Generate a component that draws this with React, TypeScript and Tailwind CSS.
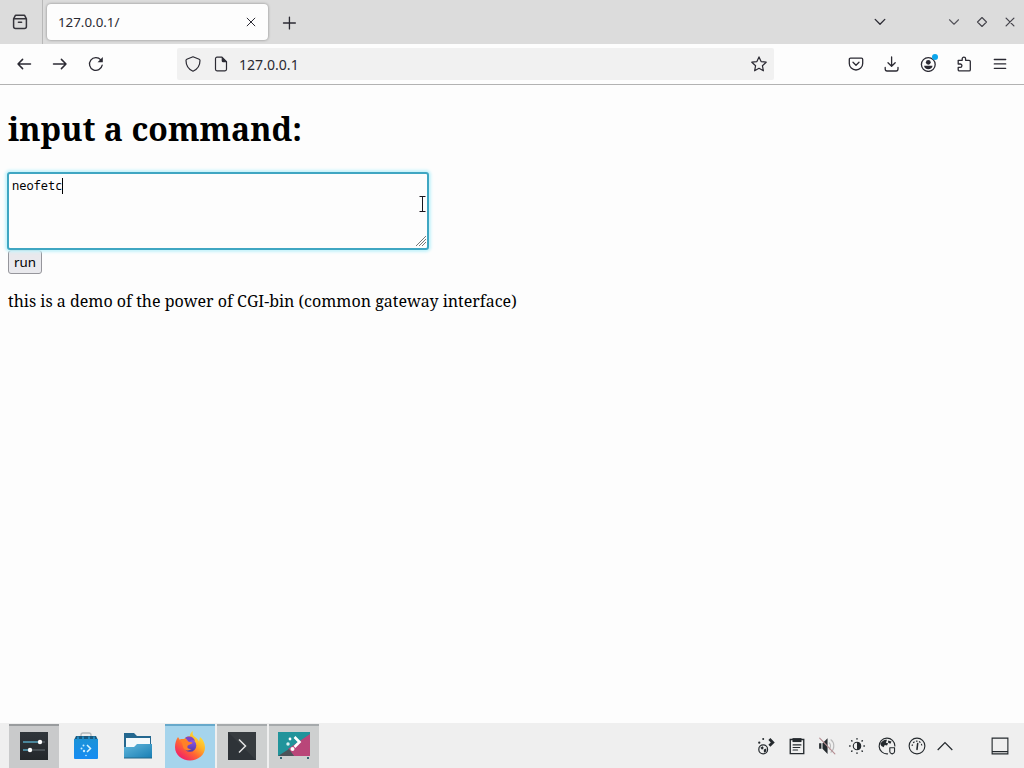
import type { ReactNode } from 'react'

type IconProps = {
  children: ReactNode
  size?: number
  className?: string
}

const Icon = ({ children, size = 16, className = '' }: IconProps) => (
  <svg
    width={size}
    height={size}
    viewBox="0 0 16 16"
    fill="none"
    stroke="currentColor"
    strokeWidth="1.3"
    strokeLinecap="round"
    strokeLinejoin="round"
    className={`block shrink-0 ${className}`}
  >
    {children}
  </svg>
)

const TabBar = () => (
  <div className="flex h-11 items-center bg-[#dcdcdc] text-[#2b2a33]">
    <div className="flex h-11 w-[43px] shrink-0 items-center border-r border-[#b8b8b8] pl-3">
      <Icon className="text-[#35343b]">
        <path d="M4 1.2h8M1.6 4.8h12.8v7.700a2 2 0 0 1-2 2H3.600a2 2 0 0 1-2-2zM1.600 4.800L3.400 1.300M14.400 4.800l-1.800-3.500M6.400 8.200h3.200" strokeWidth="1.500" />
      </Icon>
    </div>
    <div className="ml-1 flex h-9 w-[221px] shrink-0 items-center justify-between rounded bg-[#fdfdfd] pl-[11px] pr-3 shadow-[0_0_3px_rgba(0,0,0,0.4)]">
      <span className="pt-0.5 text-[13.333px] leading-none">127.0.0.1/</span>
      <Icon size={10}>
        <path d="M1.800 1.800l12.400 12.400M14.200 1.800L1.800 14.200" strokeWidth="1.600" />
      </Icon>
    </div>
    <Icon size={14} className="ml-[14px] mt-px">
      <path d="M8.500 1.200v13.600M1.700 8h13.600" strokeWidth="1.500" />
    </Icon>
    <div className="ml-auto flex items-center pr-2">
      <Icon size={14} className="mr-[61px]">
        <path d="M2.500 5L8 10.500 13.500 5" strokeWidth="1.500" />
      </Icon>
      <Icon size={12} className="mr-4 text-[#55545b]">
        <path d="M2 5l6 6 6-6" strokeWidth="1.500" />
      </Icon>
      <Icon size={12} className="mr-4 text-[#45444b]">
        <path d="M8 2l6 6-6 6-6-6z" strokeWidth="1.500" />
      </Icon>
      <Icon size={12} className="text-[#45444b]">
        <path d="M2.800 2.800l10.400 10.400M13.200 2.800L2.800 13.200" strokeWidth="1.700" />
      </Icon>
    </div>
  </div>
)

const NavBar = () => (
  <div className="flex h-[41px] items-center border-b border-[#b2b2b2] bg-[#fdfdfd] pl-4 pr-4 text-[#2b2a33]">
    <Icon>
      <path d="M14.500 8H2M6.600 3.400L2 8l4.600 4.600" strokeWidth="1.500" />
    </Icon>
    <Icon className="ml-5">
      <path d="M1.500 8H14M9.400 3.400L14 8l-4.600 4.600" strokeWidth="1.500" />
    </Icon>
    <Icon className="ml-5">
      <path d="M14.200 9.200A6.400 6.400 0 1 1 12.800 3.800" />
      <path d="M14.800 1v5.200H9.600z" fill="currentColor" stroke="none" />
    </Icon>
    <div className="ml-[73px] flex h-8 w-[597px] items-center rounded-[2px] bg-[#f1f1f1] pl-2 pr-[7px]">
      <Icon>
        <path d="M8 .8l6.200 2.500c.5.200.8.600.8 1.100 0 4.400-2.700 8.800-7 10.800C3.700 13.200 1 8.800 1 4.400c0-.5.300-.9.800-1.100z" strokeWidth="1.200" />
      </Icon>
      <Icon className="ml-3">
        <path d="M9 1.200H4a1.500 1.500 0 0 0-1.500 1.500v10.600A1.500 1.500 0 0 0 4 14.800h8a1.500 1.500 0 0 0 1.500-1.500V5.700z" strokeWidth="1.200" />
        <path d="M8.700 1v3.700A1.500 1.500 0 0 0 10.200 6.200H14z" fill="currentColor" stroke="none" />
      </Icon>
      <span className="ml-[10px] pt-0.5 text-[14.1px] leading-none">127.0.0.1</span>
      <Icon className="ml-auto">
        <path d="M8 .9l2.100 4.700 5.100.6-3.800 3.500 1 5.100L8 12.300l-4.400 2.500 1-5.100L.8 6.200l5.100-.6z" strokeWidth="1.200" />
      </Icon>
    </div>
    <div className="ml-auto flex items-center gap-5">
      <Icon>
        <path d="M2.500 2.200h11c.7 0 1.200.5 1.200 1.200v4a6.700 6.600 0 0 1-13.400 0v-4c0-.7.5-1.200 1.200-1.200zM5 6.300L8 9.200l3-2.900" />
      </Icon>
      <Icon>
        <path d="M7.600.9v9.300M4 6.700l3.600 3.600 3.600-3.600M1.200 11.500v1.600a1.900 1.900 0 0 0 1.900 1.900h9a1.900 1.900 0 0 0 1.900-1.900v-1.600" />
      </Icon>
      <div className="relative">
        <Icon>
          <circle cx="8.300" cy="8.500" r="6.900" />
          <circle cx="8.300" cy="6.300" r="2.400" fill="currentColor" stroke="none" />
          <path d="M4.100 9.700h8.400c-.1 2-2 3.600-4.200 3.600s-4.100-1.600-4.200-3.600z" fill="currentColor" stroke="none" />
        </Icon>
        <span className="absolute -right-0.5 -top-0.5 size-1.5 rounded-full bg-[#0aa5ec]" />
      </div>
      <Icon>
        <path d="M2.200 4.300h4V2.800a1.700 1.700 0 0 1 3.400 0v1.500h3.500c.7 0 1.200.5 1.200 1.200v8.200c0 .7-.5 1.200-1.200 1.200H3.400c-.7 0-1.200-.5-1.200-1.200v-2.300h2a1.700 1.700 0 0 0 0-3.400h-2z" />
      </Icon>
      <Icon>
        <path d="M2.300 3.500h11.400M2.300 7.900h11.400M2.300 12.300h11.400" />
      </Icon>
    </div>
  </div>
)

const Page = () => (
  <main className="flex-1 bg-[#fdfdfd] px-2 pt-[22px] font-['Noto_Serif','DejaVu_Serif_Condensed','DejaVu_Serif',serif] text-black">
    <h1 className="w-max whitespace-nowrap text-[32px] font-bold leading-[44px]">input a command:</h1>
    <div className="relative -ml-px mt-[21px] h-[78px] w-[422px] rounded-[3px] border-2 border-[#3fa6c2] bg-[#fdfdfd] shadow-[0_0_3px_2px_#c5f3fb]">
      <div className="flex items-center pl-[3px] pt-1 font-['Noto_Sans_Mono','DejaVu_Sans_Mono',monospace] text-[12px] leading-4">
        <span>neofetc</span>
        <span className="h-4 w-px bg-black" />
      </div>
      {/* text cursor */}
      <svg className="absolute right-0 top-[21px]" width="9" height="18" viewBox="0 0 9 18" fill="none" stroke="#18151d">
        <path d="M1.500 1.500h6M4.500 1.500v15M1.500 16.500h6" />
      </svg>
      <svg className="absolute bottom-0.5 right-px" width="10" height="10" viewBox="0 0 10 10" stroke="#777">
        <path d="M0 10L10 0M3 10l7-7M6 10l4-4" />
      </svg>
    </div>
    <button className="block h-6 w-[34px] rounded-[3px] border border-[#96969c] bg-[#e9e9ed] pt-0.5 font-['Noto_Sans',sans-serif] text-[13.333px] leading-none">
      run
    </button>
    <p className="mt-4 w-max whitespace-nowrap text-[16px] leading-[22px]">
      this is a demo of the power of CGI-bin (common gateway interface)
    </p>
  </main>
)

const SettingsIcon = () => (
  <svg width="28" height="28" viewBox="0 0 28 28">
    <defs>
      <linearGradient id="dark" x2="0" y2="1">
        <stop stopColor="#30363b" />
        <stop offset="1" stopColor="#24282b" />
      </linearGradient>
    </defs>
    <path fill="url(#dark)" d="M0 0h28v28H0z" />
    <path d="M3 10h22M3 18h22" stroke="#667077" />
    <path d="M3 10h17M3 18h7" stroke="#4dbbe0" />
    <circle cx="20" cy="10" r="2.200" fill="#fff" />
    <circle cx="10" cy="18" r="2.200" fill="#fff" />
  </svg>
)

const DiscoverIcon = () => (
  <svg width="28" height="28" viewBox="0 0 28 28">
    <defs>
      <linearGradient id="bag" x2="0" y2="1">
        <stop stopColor="#1b92d8" />
        <stop offset="1" stopColor="#168cf2" />
      </linearGradient>
    </defs>
    <path d="M9 6V3a2 2 0 0 1 2-2h6a2 2 0 0 1 2 2v3" fill="none" stroke="#b4babd" strokeWidth="1.300" />
    <path d="M4 4h20l2 4H2z" fill="#1a5a80" />
    <path d="M2 7h24v19a1 1 0 0 1-1 1H3a1 1 0 0 1-1-1z" fill="url(#bag)" />
    <path d="M5 4.500h2v3H5zM10 4.500h2v3h-2zM16 4.500h2v3h-2zM21 4.500h2v3h-2z" fill="#2689bd" />
    <path d="M15 13l3.500 3.500L15 20" fill="none" stroke="#d9f5ff" strokeWidth="1.500" />
    <circle cx="11.500" cy="13.500" r="1" fill="#c7ecff" />
    <circle cx="9.500" cy="16.500" r="1" fill="#c7ecff" />
    <circle cx="12" cy="19" r="1.200" fill="#c7ecff" />
    <circle cx="14" cy="23.500" r=".8" fill="#c7ecff" />
  </svg>
)

const FolderIcon = () => (
  <svg width="30" height="28" viewBox="0 0 30 28">
    <defs>
      <linearGradient id="folder" x2="1" y2="1">
        <stop stopColor="#62b7dc" />
        <stop offset="1" stopColor="#187eb4" />
      </linearGradient>
    </defs>
    <path d="M1 1h10l3 3h14v20H1z" fill="#24678f" />
    <path d="M3 6h24v12H3z" fill="#f4f9fb" />
    <path d="M1 15h10l3-3h15v14H1z" fill="url(#folder)" />
    <path d="M1 26h28" stroke="#226789" />
  </svg>
)

const FirefoxIcon = () => (
  <svg width="32" height="32" viewBox="0 0 32 32">
    <defs>
      <linearGradient id="fox" x1=".85" y1=".1" x2=".2" y2=".9">
        <stop stopColor="#ffe43d" />
        <stop offset=".35" stopColor="#ffb126" />
        <stop offset=".65" stopColor="#ff6433" />
        <stop offset="1" stopColor="#f12467" />
      </linearGradient>
      <linearGradient id="globe" x2="0" y2="1">
        <stop stopColor="#9659ef" />
        <stop offset="1" stopColor="#503aa8" />
      </linearGradient>
    </defs>
    <path
      d="M19 1c-1 3 0 5 2 6 3 2 4 4 4 5l1-5c4 3 5 8 5 10.500C31 25 24 30.500 16 30.500S1 25 1 17c0-4 1-7 3-10l2 3c1-1 2-1 4-1 2-2 4-3 6-3 0-2 1-4 3-5z"
      fill="url(#fox)"
    />
    <circle cx="16" cy="15.500" r="6.300" fill="url(#globe)" />
    <path d="M11 8c4-3 9-1 10 3-3-1-4-1-6 1-1-2-3-3-4-4z" fill="#7d45c8" />
    <path d="M6 9.500c3-1 7 0 8.500 2.200l4 .8c-.5 2-4 1.800-5 3.500-.8 2 1.500 3.500 4 3-3 2.500-7.500 1.500-8.500-2C8.500 14.500 8 12 6 9.500z" fill="#ff8128" />
  </svg>
)

const KonsoleIcon = () => (
  <svg width="28" height="28" viewBox="0 0 28 28">
    <path fill="#2e3338" d="M0 0h28v28H0z" />
    <path d="M0 0h28v28z" fill="#373c40" />
    <path d="M11 7.500l6.500 6.500-6.500 6.500" fill="none" stroke="#e4e4e4" strokeWidth="1.500" />
  </svg>
)

const WelcomeIcon = () => (
  <svg width="32" height="28" viewBox="0 0 32 28">
    <path d="M0 0h32v24H0z" fill="#21949b" />
    <path d="M32 2v22H16l-6-7z" fill="#b94679" />
    <path d="M0 24l11-7 5 7z" fill="#4d5358" />
    <path d="M16.500 5l5 5-5 5" fill="none" stroke="#fff" strokeWidth="2.600" />
    <circle cx="12" cy="7" r="1.400" fill="#fff" />
    <circle cx="10" cy="12" r="1.700" fill="#d9f3f3" />
    <circle cx="14.500" cy="17" r="2" fill="#fff" />
    <path d="M2 26h2M29 26h2" stroke="#326773" strokeWidth="2" />
  </svg>
)

const tasks = [
  { name: 'settings', icon: <SettingsIcon />, style: 'bg-[#c9cacb] border-[#999c9e]' },
  { name: 'discover', icon: <DiscoverIcon />, style: 'border-transparent' },
  { name: 'files', icon: <FolderIcon />, style: 'border-transparent' },
  { name: 'firefox', icon: <FirefoxIcon />, style: 'bg-[#a5d4ec] border-[#67a9cb]' },
  { name: 'konsole', icon: <KonsoleIcon />, style: 'bg-[#ced0d0] border-[#a6aaac]' },
  { name: 'welcome', icon: <WelcomeIcon />, style: 'bg-[#ced0d0] border-[#a6aaac]' },
]

const Tray = () => (
  <div className="ml-auto flex items-center pr-[15px] text-[#252a2e]">
    <Icon size={18} className="mr-[13px]">
      <circle cx="5.500" cy="11" r="3.900" strokeWidth="1.100" />
      <path d="M3 9.500l2-1.300 1 1.600-1.500 1.600zM6 11l2.200-.8v2.600l-2 1.200z" fill="currentColor" stroke="none" />
      <path d="M11 1.800l3 3-3 3" strokeWidth="2.500" strokeLinecap="butt" strokeLinejoin="miter" />
      <circle cx="5.500" cy="1.800" r=".9" fill="currentColor" stroke="none" />
      <circle cx="2" cy="5" r="1" fill="currentColor" stroke="none" />
    </Icon>
    <Icon size={18} className="mr-3">
      <path d="M2 2.200h12v12.600H2z" strokeWidth="1.200" strokeLinejoin="miter" />
      <path d="M4 1h8v3.500H4z" fill="currentColor" stroke="none" />
      <path d="M4.500 7h7M4.500 9.300h6M4.500 11.600h4" strokeWidth="1" />
    </Icon>
    <Icon size={18} className="mr-3">
      <path d="M1 5.500h2v5H1zM4 5.500L8.500 1v14L4 10.500z" fill="currentColor" stroke="none" />
      <path d="M10 5.300c1.500 1.500 1.500 3.900 0 5.400M11.500 2.500c3.400 2.600 3.400 8.400 0 11" stroke="#b9b9ba" strokeWidth="1" />
      <path d="M1.500 1l13.500 14" stroke="#b58d92" strokeWidth="1" />
    </Icon>
    <Icon size={18} className="mr-3">
      <circle cx="8" cy="8" r="3.300" strokeWidth="1" />
      <path d="M8 4.500a3.500 3.500 0 0 1 0 7z" fill="currentColor" stroke="none" />
      <path d="M8 1.500v.3M8 14.200v.3M1.500 8h.3M14.200 8h.3M3.300 3.300l.2.200M12.500 12.500l.2.200M12.700 3.300l-.2.200M3.500 12.500l-.2.200" strokeWidth="1.400" />
    </Icon>
    <Icon size={18} className="mr-3">
      <path d="M8.500 15A7 7 0 1 1 15 8" strokeWidth="1" />
      <path d="M2 6c2-3 4-4 6-3.500L7 5l2 .5-1 2-2-.5-1 2-2-1zM9 3l3 1-1 2-2-1z" fill="currentColor" stroke="none" />
      <path d="M10.500 9.500h4.200v3.500c0 1-1 1.600-2.100 2-1.100-.4-2.100-1-2.100-2z" strokeWidth="1" />
    </Icon>
    <Icon size={18} className="mr-[10px]">
      <circle cx="8" cy="8" r="7" strokeWidth="1" />
      <path d="M3.700 8a4.300 4.300 0 0 1 8.600 0" strokeWidth="1" strokeDasharray="1.500 1.300" strokeLinecap="butt" />
      <path d="M8.600 5.800L8 11" strokeWidth="1.400" />
    </Icon>
    <Icon size={18} className="mr-[37px]">
      <path d="M1.500 11.500L8 5l6.500 6.500" strokeWidth="1.100" strokeLinecap="butt" strokeLinejoin="miter" />
    </Icon>
    <Icon size={18}>
      <path d="M1 1h14v14H1zM1 13h14" strokeWidth="1" strokeLinejoin="miter" />
    </Icon>
  </div>
)

const Taskbar = () => (
  <footer className="flex h-[45px] items-center bg-[#efefef] pl-[9px] pt-px">
    <div className="flex gap-0.5">
      {tasks.map((task) => (
        <div key={task.name} className={`flex h-11 w-[50px] items-center justify-center border-t-2 pb-0.5 ${task.style}`}>
          {task.icon}
        </div>
      ))}
    </div>
    <Tray />
  </footer>
)

export default function App() {
  return (
    <div className="flex h-screen w-screen flex-col overflow-hidden font-['Noto_Sans',sans-serif]">
      <TabBar />
      <NavBar />
      <Page />
      <Taskbar />
    </div>
  )
}
